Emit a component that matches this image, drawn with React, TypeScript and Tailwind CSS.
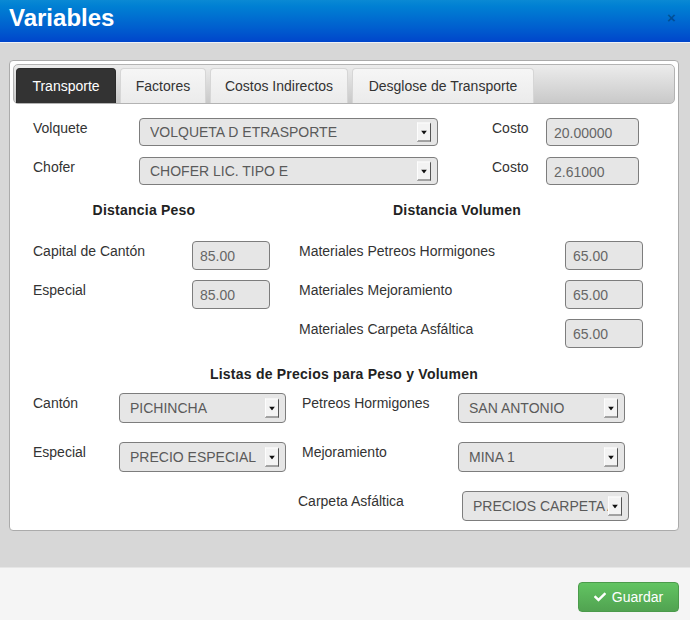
import React from 'react';
import { FaCheck } from 'react-icons/fa';

const Arrow = () => (
  <div className="absolute right-[6px] top-1/2 flex h-[19px] w-[14px] -translate-y-1/2 items-center justify-center border border-t-[#fdfdfd] border-l-[#fdfdfd] border-r-[#555] border-b-[#555] bg-[#f3f3f3]">
    <svg width="6" height="4" viewBox="0 0 6 4">
      <path d="M0 0H6L3 4Z" fill="#111" />
    </svg>
  </div>
);

const Select = ({ value, className }: { value: string; className: string }) => (
  <div className={`relative flex items-center rounded-[4px] border border-[#7d7d7d] bg-[#e6e6e6] pl-[10px] pr-[8px] ${className}`}>
    <span className="min-w-0 flex-1 overflow-hidden whitespace-nowrap text-[#5a5a5a]">{value}</span>
    <Arrow />
  </div>
);

const Input = ({ value, className }: { value: string; className: string }) => (
  <div className={`flex items-center rounded-[4px] border border-[#7d7d7d] bg-[#e6e6e6] pl-[7px] pt-[2px] text-[#666] ${className}`}>
    {value}
  </div>
);

const Label = ({ children, className = '' }: { children: React.ReactNode; className?: string }) => (
  <div className={`shrink-0 whitespace-nowrap leading-[20px] ${className}`}>{children}</div>
);

const Heading = ({ children, className = '' }: { children: React.ReactNode; className?: string }) => (
  <div className={`text-center text-[14px] font-bold leading-[20px] tracking-[0.23px] text-[#222] ${className}`}>
    {children}
  </div>
);

const tabs = [
  { name: 'Transporte', w: 'w-[100px]' },
  { name: 'Factores', w: 'w-[86px]' },
  { name: 'Costos Indirectos', w: 'w-[138px]' },
  { name: 'Desglose de Transporte', w: 'w-[182px]' },
];

export default function App() {
  return (
    <div className="flex h-[620px] w-[690px] flex-col bg-[#d7d7d7] font-['Liberation_Sans',Arial,sans-serif] text-[14px] text-[#333]">
      {/* header */}
      <header className="flex h-[43px] shrink-0 items-start justify-between border-b border-[#eef1f6] bg-linear-to-b from-[#0a89d4] to-[#0045cb] px-[9px]">
        <h1 className="mt-[4px] text-[24px] font-bold leading-[28px] text-white">Variables</h1>
        <span className="mr-[5px] mt-[10px] text-[15px] font-bold leading-[15px] text-black/30">×</span>
      </header>

      <div className="flex-1 pt-[17px]">
        <div className="ml-[9px] h-[471px] w-[670px] rounded-[4px] border border-[#ababab] bg-white p-[3px]">
          {/* tab bar */}
          <div className="flex h-[40px] items-end gap-[4px] rounded-[5px] border border-[#b3b3b3] bg-linear-to-b from-[#ececec] to-[#c9c9c9] pl-[2px]">
            {tabs.map((t, i) => (
              <div
                key={t.name}
                className={`flex h-[35px] items-center justify-center rounded-t-[4px] border border-b-0 ${t.w} ${
                  i === 0
                    ? 'border-[#2b2b2b] bg-[#333] text-white'
                    : 'border-[#d6d6d6] bg-linear-to-b from-[#f6f6f6] to-[#ebebeb] text-[#333]'
                }`}
              >
                {t.name}
              </div>
            ))}
          </div>

          <div className="px-[20px]">
            {/* Volquete / Chofer */}
            <div className="mt-[14px] flex items-start">
              <Label className="w-[106px]">Volquete</Label>
              <Select value="VOLQUETA D ETRASPORTE" className="h-[28px] w-[299px]" />
              <Label className="ml-[54px] w-[54px]">Costo</Label>
              <Input value="20.00000" className="h-[28px] w-[93px]" />
            </div>
            <div className="mt-[11px] flex items-start">
              <Label className="w-[106px]">Chofer</Label>
              <Select value="CHOFER LIC. TIPO E" className="h-[28px] w-[299px]" />
              <Label className="ml-[54px] w-[54px]">Costo</Label>
              <Input value="2.61000" className="h-[28px] w-[93px]" />
            </div>

            {/* distancias */}
            <div className="mt-[15px] flex items-start">
              <div className="flex w-[266px] flex-col">
                <Heading className="w-[222px]">Distancia Peso</Heading>
                <div className="mt-[21px] flex flex-col gap-[10px]">
                  <div className="flex items-start">
                    <Label className="w-[159px]">Capital de Cantón</Label>
                    <Input value="85.00" className="h-[29px] w-[78px]" />
                  </div>
                  <div className="flex items-start">
                    <Label className="w-[159px]">Especial</Label>
                    <Input value="85.00" className="h-[29px] w-[78px]" />
                  </div>
                </div>
              </div>
              <div className="flex flex-col">
                <Heading className="w-[316px]">Distancia Volumen</Heading>
                <div className="mt-[21px] flex flex-col gap-[10px]">
                  <div className="flex items-start">
                    <Label className="w-[266px]">Materiales Petreos Hormigones</Label>
                    <Input value="65.00" className="h-[29px] w-[78px]" />
                  </div>
                  <div className="flex items-start">
                    <Label className="w-[266px]">Materiales Mejoramiento</Label>
                    <Input value="65.00" className="h-[29px] w-[78px]" />
                  </div>
                  <div className="flex items-start">
                    <Label className="w-[266px]">Materiales Carpeta Asfáltica</Label>
                    <Input value="65.00" className="h-[29px] w-[78px]" />
                  </div>
                </div>
              </div>
            </div>

            {/* listas de precios */}
            <Heading className="mt-[16px]">Listas de Precios para Peso y Volumen</Heading>
            <div className="mt-[9px] flex items-start">
              <Label className="w-[86px]">Cantón</Label>
              <Select value="PICHINCHA" className="h-[30px] w-[167px]" />
              <Label className="ml-[16px] w-[156px]">Petreos Hormigones</Label>
              <Select value="SAN ANTONIO" className="h-[30px] w-[167px]" />
            </div>
            <div className="mt-[19px] flex items-start">
              <Label className="w-[86px]">Especial</Label>
              <Select value="PRECIO ESPECIAL" className="h-[30px] w-[167px]" />
              <Label className="ml-[16px] w-[156px]">Mejoramiento</Label>
              <Select value="MINA 1" className="h-[30px] w-[167px]" />
            </div>
            <div className="mt-[19px] flex items-start">
              <Label className="ml-[265px] w-[164px]">Carpeta Asfáltica</Label>
              <Select value="PRECIOS CARPETA ASFALTICA" className="h-[30px] w-[167px]" />
            </div>
          </div>
        </div>
      </div>

      {/* footer */}
      <footer className="flex h-[53px] shrink-0 items-start justify-end border-t border-[#e6e6e6] bg-[#f5f5f5] pr-[11px] pt-[14px]">
        <button className="flex h-[30px] w-[101px] items-center justify-center gap-[6px] rounded-[4px] border border-[#4b9b4b] bg-linear-to-b from-[#62c462] to-[#51a351] text-white">
          <FaCheck size={12} />
          Guardar
        </button>
      </footer>
    </div>
  );
}
